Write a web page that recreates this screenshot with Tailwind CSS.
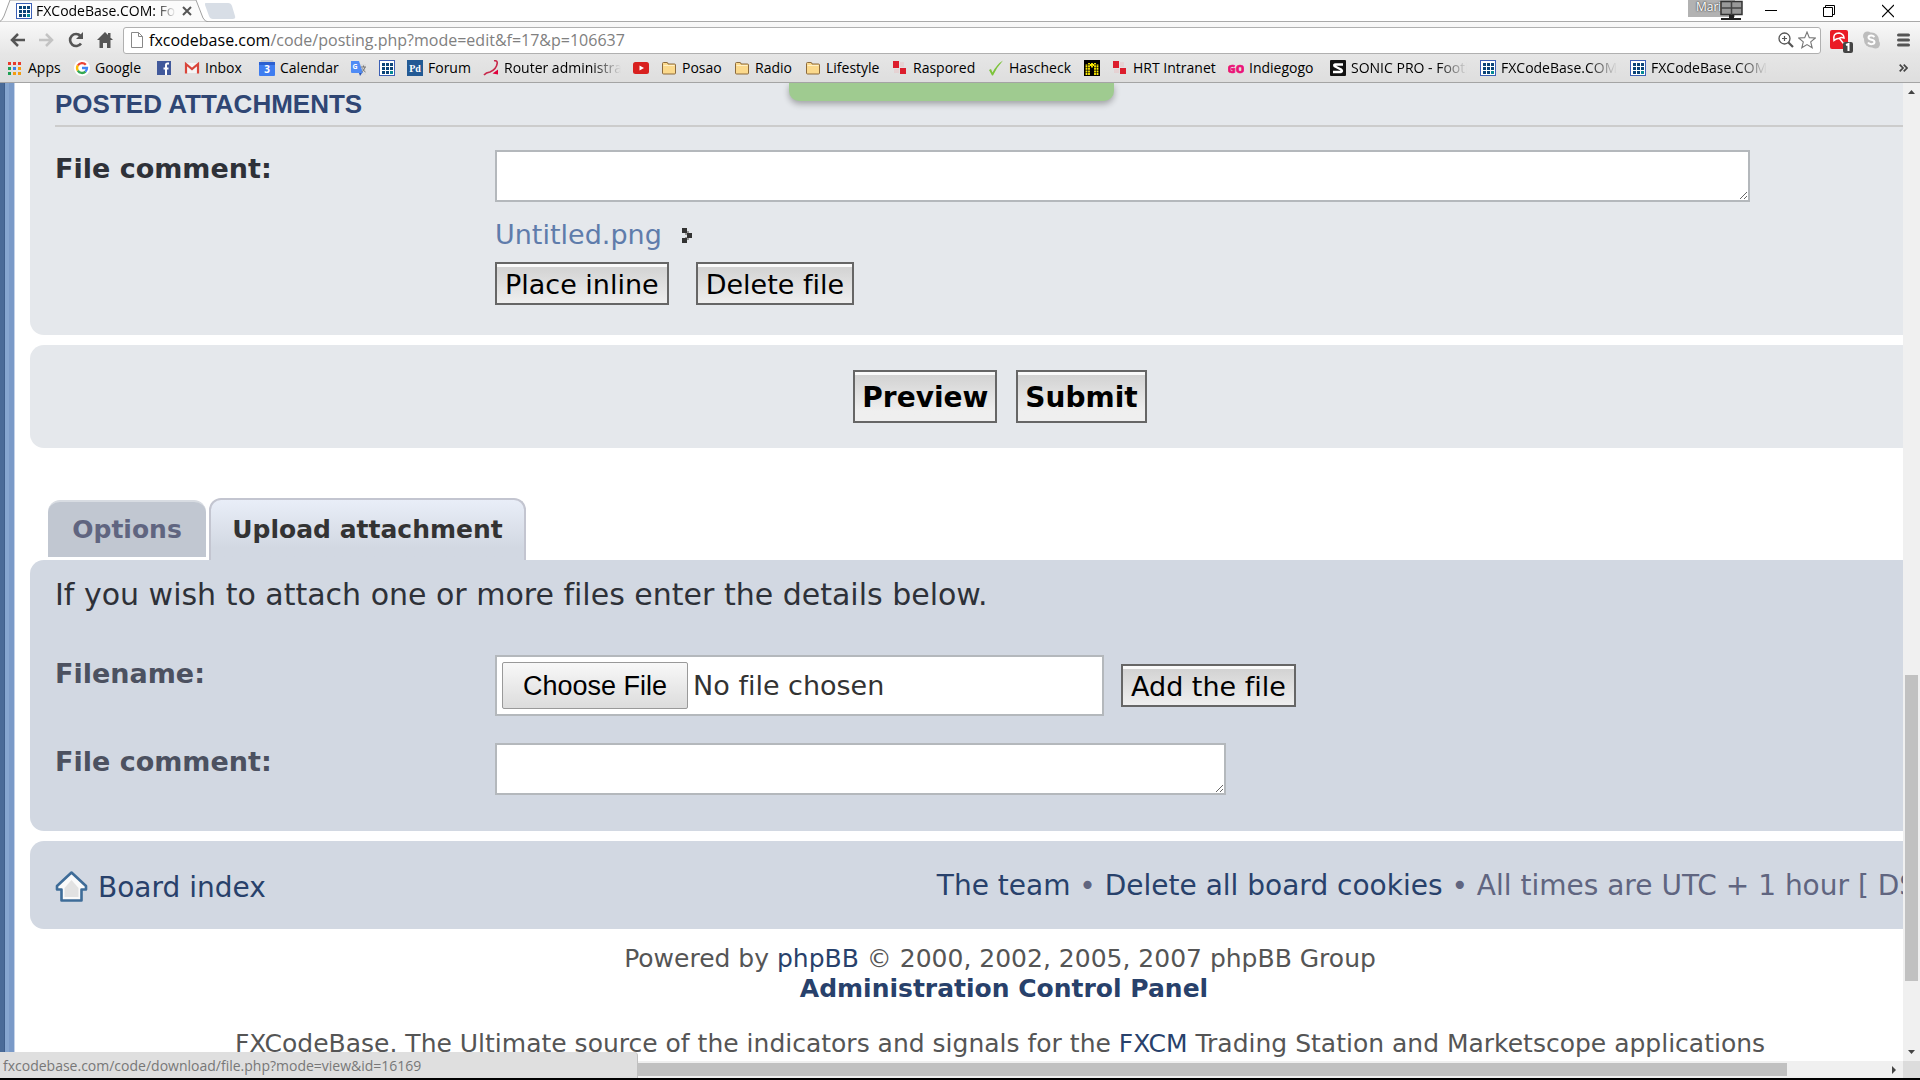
<!DOCTYPE html>
<html lang="en">
<head>
<meta charset="utf-8">
<title>FXCodeBase.COM: Forum</title>
<script src="https://cdn.jsdelivr.net/npm/@tailwindcss/browser@4"></script>
</head>
<body class="h-screen flex flex-col overflow-hidden bg-white font-['Open_Sans',sans-serif] text-sm text-black">

<svg class="hidden" aria-hidden="true">
  <symbol id="fx" viewBox="0 0 16 16"><rect width="16" height="16" fill="#3b5fb5"/><rect x="1" y="1" width="14" height="14" fill="#fff"/><path fill="#0b4478" d="M3 3h3v3H3zM7 3h3v3H7zM11 3h3v3h-3zM3 7h3v3H3zM7 7h3v3H7zM11 7h3v3h-3zM3 11h3v3H3zM7 11h3v3H7z"/><path fill="#078a94" d="M11 11h3v3h-3z"/></symbol>
  <symbol id="folder" viewBox="0 0 16 16"><path d="M1.500 13V3.500q0-1 1-1h3.500q1 0 1 1.500h6.500q1 0 1 1V13q0 1-1 1h-11q-1 0-1-1z" fill="#fbd98c" stroke="#8c6a3c"/><path d="M2.500 5.500h11" stroke="#fff0c8"/></symbol>
  <symbol id="hrt" viewBox="0 0 16 16"><path fill="#dc1e2d" d="M1 1h6v7H1zM8 8h6v6H8z"/><path fill="#f0b0b4" d="M8 2h4v5H8zM2 9h5v4H2z" opacity=".3"/></symbol>
</svg>

<!-- tab strip -->
<header class="shrink-0">
  <div class="h-[22px] flex border-b border-[#a9a9a9] bg-white">
    <div class="relative w-[205px] h-[22px]">
      <svg class="absolute inset-0" width="208" height="22" viewBox="0 0 208 22"><path d="M-1 22Q2 21 4 16L10 0H196L203 18Q205 22 209 22z" fill="#fbfbfb" stroke="#a0a0a0"/></svg>
      <div class="relative h-full flex items-center pl-4">
        <svg class="size-4"><use href="#fx"/></svg>
        <span class="ml-1 w-[140px] overflow-hidden whitespace-nowrap mask-r-from-85%">FXCodeBase.COM: Forum</span>
        <button class="ml-1.5" aria-label="Close tab"><svg width="10" height="10" viewBox="0 0 10 10"><path d="M1 1l8 8M9 1l-8 8" stroke="#555" stroke-width="2"/></svg></button>
      </div>
    </div>
    <button aria-label="New tab" class="h-[22px]"><svg width="32" height="22" viewBox="0 0 32 22"><path d="M1 3H23Q26 3 27 6L30 16Q31 19 28 19H8Q5 19 4 16L0 5Q-1 3 1 3z" fill="#d8dee6"/></svg></button>
    <div class="flex-1"></div>
    <div class="relative w-[55px] h-[22px]">
      <div class="h-[17px] w-[47px] bg-[#b2b2b2] pl-2 text-xs/[14px] text-white text-shadow-[0_0_2px_#000]">Mari</div>
      <svg class="absolute left-8 top-0" width="23" height="20" viewBox="0 0 23 20"><rect x="1" y="1.500" width="21" height="13" fill="#999" stroke="#333" stroke-width="1.500"/><path d="M11.500 1v14M1 8h21" stroke="#444" stroke-width="1.500"/><path d="M9 15h5v3H9zM1 18h20v2H1z" fill="#222"/></svg>
    </div>
    <button aria-label="Minimize" class="ml-[22px]"><svg width="12" height="22" viewBox="0 0 12 22"><path d="M0 10.500h12" stroke="#000"/></svg></button>
    <button aria-label="Restore" class="ml-[46px]"><svg width="12" height="22" viewBox="0 0 12 22"><path d="M.5 7.500h9v9h-9zM2.500 7.500v-2h9v9h-2" fill="none" stroke="#000"/></svg></button>
    <button aria-label="Close" class="ml-[47px] mr-[26px]"><svg width="12" height="22" viewBox="0 0 12 22"><path d="M0 5l12 12M12 5L0 17" stroke="#000" stroke-width="1.200"/></svg></button>
  </div>

  <!-- toolbar -->
  <div class="h-8 flex items-center bg-linear-to-b from-[#f9f9f9] to-[#e6e6e6] pl-2.5 pr-2.5 pt-1">
    <button aria-label="Back"><svg width="16" height="16" viewBox="0 0 16 16"><path d="M8 2L2 8l6 6M2 8h13" fill="none" stroke="#555" stroke-width="2.500"/></svg></button>
    <button aria-label="Forward" class="ml-3"><svg width="16" height="16" viewBox="0 0 16 16"><path d="M8 2l6 6-6 6M14 8H1" fill="none" stroke="#c3c3c3" stroke-width="2.500"/></svg></button>
    <button aria-label="Reload" class="ml-3.5"><svg width="16" height="16" viewBox="0 0 16 16"><path d="M13 11.500A6 6 0 1 1 12.500 4" fill="none" stroke="#555" stroke-width="2.600"/><path d="M15 0v7H8z" fill="#555"/></svg></button>
    <button aria-label="Home" class="ml-3"><svg width="18" height="16" viewBox="0 0 18 16"><path d="M9 0l8 8h-2.500v8H11v-5H7v5H3.500V8H1zM12 1h2.500v4H12z" fill="#555"/></svg></button>
    <div class="ml-[9px] flex-1 h-[27px] flex items-center rounded-[3px] border border-[#b0b0b0] bg-white pl-[7px] pr-1">
      <svg width="12" height="16" viewBox="0 0 12 16"><path d="M.5.5h7l4 4v11H.5zM7.500.5v4h4" fill="#fff" stroke="#888"/></svg>
      <div class="ml-1.5 flex-1 text-base/6 text-[#808080]"><span class="text-black">fxcodebase.com</span>/code/posting.php?mode=edit&amp;f=17&amp;p=106637</div>
      <button aria-label="Zoom"><svg width="16" height="16" viewBox="0 0 16 16"><circle cx="6.500" cy="6.500" r="5.500" fill="none" stroke="#555" stroke-width="1.300"/><path d="M10.500 10.500l4.500 4.500" stroke="#555" stroke-width="2.200"/><path d="M4 6.500h5M6.500 4v5" stroke="#555" stroke-width="1.200"/></svg></button>
      <button aria-label="Bookmark this page" class="ml-1"><svg width="18" height="18" viewBox="0 0 18 18"><path d="M9 1l2.300 5.600 6 .4-4.600 3.900 1.500 5.900L9 13.600l-5.200 3.200 1.500-5.900L.7 7l6-.4z" fill="#fff" stroke="#777" stroke-width="1.100"/></svg></button>
    </div>
    <button aria-label="Avira" class="ml-2"><svg width="26" height="25" viewBox="0 0 26 25"><rect x="1" y="2" width="18" height="19" rx="2" fill="#ea1b25"/><path d="M5 12.500Q3.500 5 10 5q5 1 5 5-3-1-5 .5-2-.5-5 2zM10.500 10.500l3.500 4.500q2 1 2.500-1" fill="none" stroke="#fff" stroke-width="1.500"/><rect x="14" y="14" width="10" height="11" rx="2" fill="#444"/><path d="M17 17l2.500-1v7" fill="none" stroke="#fff" stroke-width="2"/></svg></button>
    <button aria-label="Skype" class="ml-[7px]"><svg width="19" height="18" viewBox="0 0 19 18"><circle cx="9.500" cy="9" r="7.500" fill="#bdbdbd"/><circle cx="5.500" cy="5" r="4.500" fill="#bdbdbd"/><circle cx="13.500" cy="13" r="4.500" fill="#bdbdbd"/><path d="M12.500 6Q11 4.500 9.300 4.500 6.500 4.500 6.500 6.500c0 3 6 1.500 6 4.500 0 2.500-5 3-6.500.5" fill="none" stroke="#fff" stroke-width="2"/></svg></button>
    <button aria-label="Menu" class="ml-4"><svg width="13" height="16" viewBox="0 0 13 16"><path d="M1.500 3h10M1.500 8h10M1.500 13h10" stroke="#555" stroke-width="3" stroke-linecap="round"/></svg></button>
  </div>

  <!-- bookmarks bar -->
  <nav class="h-[29px] flex items-center border-b border-[#a4a4a4] bg-linear-to-b from-[#e6e6e6] to-[#dedede] pl-[7px] whitespace-nowrap [&>a]:flex [&>a]:items-center [&>a]:gap-[5px] [&>a]:shrink-0">
    <a href="#" class="w-[67px]"><svg class="size-4" viewBox="0 0 16 16"><path fill="#e8392b" d="M1 2h3v3H1zM6 2h3v3H6zM11 2h3v3h-3z"/><path fill="#f39c12" d="M11 7h3v3h-3zM11 12h3v3h-3zM6 12h3v3H6z"/><path fill="#1ea053" d="M1 7h3v3H1zM1 12h3v3H1z"/><path fill="#3c7ee8" d="M6 7h3v3H6z"/></svg>Apps</a>
    <a href="#" class="w-[82px]"><svg class="size-4" viewBox="0 0 16 16"><circle cx="8" cy="8" r="8" fill="#fff"/><g fill="none" stroke-width="2.300"><path d="M3.800 5.500A5 5 0 0 1 11.800 4.700" stroke="#ea4335"/><path d="M3.800 10.600a5 5 0 0 1 0-5.200" stroke="#fbbc05"/><path d="M11.500 11.600a5 5 0 0 1-7.700-1" stroke="#34a853"/><path d="M8 8h5a5 5 0 0 1-1.600 3.700" stroke="#4285f4"/></g></svg>Google</a>
    <a href="#" class="w-7" aria-label="Facebook"><svg class="size-4" viewBox="0 0 16 16"><rect x="1" y="1" width="14" height="14" fill="#41599b"/><path d="M13 3.500h-1.500q-1.500 0-1.500 1.500v10M7.500 8.500h5" stroke="#fff" stroke-width="2" fill="none"/></svg></a>
    <a href="#" class="w-[75px]"><svg class="size-4" viewBox="0 0 16 16"><path d="M2 3h12v10H2z" fill="#f5f5f5"/><path d="M2 13.500V4l6 5 6-5v9.500" fill="none" stroke="#d9453a" stroke-width="2.200"/></svg>Inbox</a>
    <a href="#" class="w-[92px]"><svg class="size-4" viewBox="0 0 16 16"><path d="M2 0h12l1 3H1z" fill="#c9cdd3"/><rect y="2" width="16" height="14" rx="1" fill="#3f7df0"/><path d="M0 2h16v3H0z" fill="#2b5fd0"/><text x="8" y="13" text-anchor="middle" font-size="10" font-weight="700" fill="#fff">3</text></svg>Calendar</a>
    <a href="#" class="w-7" aria-label="Translate"><svg class="size-4" viewBox="0 0 16 16"><path d="M6 4h9v11H9z" fill="#dcdcdc"/><path d="M0 1h8l4 12H1q-1 0-1-1z" fill="#4f8bf5"/><path d="M8 13h3l-2 3z" fill="#2a56b8"/><text x="1.500" y="9" font-size="7" font-weight="700" fill="#fff">G</text><path d="M10 7h5M12.500 5.500V7M14 7q-1 4-3.500 5M11.500 8.500q1 2.500 3 3.500" stroke="#777" fill="none"/></svg></a>
    <a href="#" class="w-7" aria-label="FXCodeBase"><svg class="size-4"><use href="#fx"/></svg></a>
    <a href="#" class="w-[76px]"><svg class="size-4" viewBox="0 0 16 16"><rect width="16" height="16" fill="#235a94"/><text x="8" y="12" text-anchor="middle" font-size="10" font-weight="700" font-family="Liberation Serif" fill="#fff">Pd</text></svg>Forum</a>
    <a href="#" class="w-[150px]"><svg class="size-4 shrink-0" viewBox="0 0 16 16"><path d="M11 .8q3.500-.5 3.200 2.500Q13.500 9 7 12 3 12.500 1 15" fill="none" stroke="#c8284a" stroke-width="1.600"/><path d="M9.500 13.500L15 9.500v5z" fill="#e0003c"/></svg><span class="w-[117px] overflow-hidden mask-r-from-75%">Router administration</span></a>
    <a href="#" class="w-7" aria-label="YouTube"><svg class="size-4" viewBox="0 0 16 16"><rect y="2" width="16" height="12" rx="2.500" fill="#d8201f"/><path d="M6.500 5.500v5L11 8z" fill="#fff"/></svg></a>
    <a href="#" class="w-[73px]"><svg class="size-4"><use href="#folder"/></svg>Posao</a>
    <a href="#" class="w-[71px]"><svg class="size-4"><use href="#folder"/></svg>Radio</a>
    <a href="#" class="w-[87px]"><svg class="size-4"><use href="#folder"/></svg>Lifestyle</a>
    <a href="#" class="w-24"><svg class="size-4"><use href="#hrt"/></svg>Raspored</a>
    <a href="#" class="w-24"><svg class="size-4" viewBox="0 0 16 16"><path d="M1 10l2-1 1.500 3.500Q9 4 15 .5 9 7 5 15.500H4z" fill="#7cc33a"/></svg>Hascheck</a>
    <a href="#" class="w-7" aria-label="Manager"><svg class="size-4" viewBox="0 0 16 16"><rect width="16" height="16" fill="#000"/><path d="M2.500 15V4M5 15V3M11 15V3M13.500 15V4M6 5h4M8 3v5" fill="none" stroke="#ffee00" stroke-width="1.800" stroke-dasharray="2 .6"/></svg></a>
    <a href="#" class="w-[116px]"><svg class="size-4"><use href="#hrt"/></svg>HRT Intranet</a>
    <a href="#" class="w-[102px]"><svg class="size-4" viewBox="0 0 16 16"><text x="8" y="12.500" text-anchor="middle" font-size="11" font-weight="800" stroke="#eb1478" stroke-width=".6" fill="#eb1478">GO</text></svg>Indiegogo</a>
    <a href="#" class="w-[150px]"><svg class="size-4 shrink-0" viewBox="0 0 16 16"><rect width="16" height="16" rx="1" fill="#111"/><path d="M13 4.500H5.500q-2 0-1 1.700L11 9.500q2 1.700 0 2.500H3" fill="none" stroke="#fff" stroke-width="2.300"/></svg><span class="w-[116px] overflow-hidden mask-r-from-75%">SONIC PRO - Football</span></a>
    <a href="#" class="w-[150px]"><svg class="size-4 shrink-0"><use href="#fx"/></svg><span class="w-[116px] overflow-hidden mask-r-from-75%">FXCodeBase.COM: Forum</span></a>
    <a href="#" class="w-[150px]"><svg class="size-4 shrink-0"><use href="#fx"/></svg><span class="w-[116px] overflow-hidden mask-r-from-75%">FXCodeBase.COM: Forum</span></a>
    <button class="ml-auto mr-3" aria-label="More bookmarks"><svg width="9" height="8" viewBox="0 0 9 8"><path d="M.7.7L4 4 .7 7.300M4.700.7L8 4 4.700 7.300" fill="none" stroke="#444" stroke-width="1.700"/></svg></button>
  </nav>
</header>

<!-- page viewport -->
<div class="relative flex-1 min-h-0 flex">
  <main class="relative flex-1 min-w-0 overflow-hidden flex font-['DejaVu_Sans',sans-serif] text-[27px]/[34px] [font-variant-ligatures:none]">
    <div class="w-4 shrink-0 flex">
      <div class="w-1 bg-[#4a6b98]"></div>
      <div class="w-px bg-[#3f5f8c]"></div>
      <div class="w-1 bg-[#86a6d0]"></div>
      <div class="w-[5px] bg-[#7a9ac8]"></div>
      <div class="w-px bg-[#c5d3e8]"></div>
    </div>
    <div class="flex-1 ml-3.5 -mr-[67px] min-w-0">

      <section class="h-[252px] rounded-bl-[14px] bg-[#e5e8ec] pl-[25px] pr-[25px]">
        <h3 class="pt-1 h-[44px] border-b-2 border-[#cccccc] -mr-[25px] font-['Liberation_Sans',sans-serif] font-bold text-[26px]/[34px] text-[#2f4674]">POSTED ATTACHMENTS</h3>
        <div class="flex pt-[23px]">
          <label for="c1" class="w-[440px] shrink-0 pt-0.5 font-bold text-[#2e3138]">File comment:</label>
          <div class="flex-1">
            <textarea id="c1" class="block w-full max-w-[1255px] h-[52px] border-2 border-[#b4b8bc] bg-white"></textarea>
            <div class="mt-4 flex items-center"><a href="#" class="text-[#5f7cab]">Untitled.png</a>
              <svg class="ml-5" width="10" height="15" viewBox="0 0 10 15"><path fill="#333" d="M0 0h5v5H0zM5 5h5v5H5zM0 10h5v5H0z"/><path fill="#999" d="M5 3h2v2H5zM3 5h2v2H3zM3 9h2v1H3zM5 10h2v2H5z"/></svg></div>
            <div class="mt-2.5 flex gap-[27px]">
              <button class="h-[43px] px-2 pt-0.5 border-2 border-[#666] bg-linear-to-b from-[#d0d0d0] to-[#efefef] inset-shadow-[0_3px_0_#fafafa]">Place inline</button>
              <button class="h-[43px] px-2 pt-0.5 border-2 border-[#666] bg-linear-to-b from-[#d0d0d0] to-[#efefef] inset-shadow-[0_3px_0_#fafafa]">Delete file</button>
            </div>
          </div>
        </div>
      </section>

      <section class="mt-2.5 h-[103px] rounded-l-[14px] bg-[#e5e8ec] flex items-center justify-center gap-[19px] font-bold text-[28px]/[34px]">
        <button class="h-[53px] px-[7px] pt-0.5 border-2 border-[#666] bg-linear-to-b from-[#d0d0d0] to-[#efefef] to-80% inset-shadow-[0_3px_0_#fafafa]">Preview</button>
        <button class="h-[53px] px-[7px] pt-0.5 border-2 border-[#666] bg-linear-to-b from-[#d0d0d0] to-[#efefef] to-80% inset-shadow-[0_3px_0_#fafafa]">Submit</button>
      </section>

      <div class="mt-[50px] ml-[18px] h-[62px] flex gap-[3px] font-bold text-[25px]/[32px]">
        <a href="#" class="mt-0.5 h-[57px] w-[158px] rounded-t-xl border-t-2 border-[#d8dce2] bg-[#c1c7d1] pt-3 text-center text-[#606580]">Options</a>
        <a href="#" class="h-[62px] w-[317px] rounded-t-xl border-2 border-b-0 border-[#c3c5d0] bg-linear-to-b from-[#e9eef8] to-[#d2d8e2] to-80% pt-3.5 text-center text-[#333]">Upload attachment</a>
      </div>

      <section class="h-[271px] rounded-l-[14px] bg-[#d2d8e2] px-[25px] pt-[18px] text-[#4c5160]">
        <p class="text-[30px]/[34px] text-[#2e3138]">If you wish to attach one or more files enter the details below.</p>
        <div class="mt-[43px] flex">
          <label for="f" class="w-[440px] shrink-0 pt-0.5 font-bold">Filename:</label>
          <div class="flex items-center gap-[17px]">
            <input id="f" type="file" class="w-[609px] h-[61px] border-2 border-[#b4b8bc] bg-white p-[5px] text-[27px]/[36px] text-[#333] file:mr-[5px] file:h-[47px] file:rounded-[2px] file:border file:border-[#999] file:bg-linear-to-b file:from-[#f8f8f8] file:to-[#dcdcdc] file:px-5 file:font-['Liberation_Sans',sans-serif] file:text-[27px] file:text-black">
            <button class="h-[43px] px-2 pt-0.5 border-2 border-[#666] bg-linear-to-b from-[#d0d0d0] to-[#efefef] inset-shadow-[0_3px_0_#fafafa] text-black">Add the file</button>
          </div>
        </div>
        <div class="mt-[27px] flex">
          <label for="c2" class="w-[440px] shrink-0 pt-0.5 font-bold">File comment:</label>
          <textarea id="c2" class="block w-[731px] h-[52px] border-2 border-[#b4b8bc] bg-white"></textarea>
        </div>
      </section>

      <footer>
        <div class="mt-2.5 h-[88px] rounded-l-[14px] bg-[#d2d8e2] pl-[25px] pr-4 pt-0.5 flex items-center justify-between whitespace-nowrap text-[28px]/[34px] text-[#606580]">
          <a href="#" class="flex items-center gap-2.5 text-[#28416b]">
            <svg width="33" height="31" viewBox="0 0 33 31"><path d="M16.500 1.500L31 15v3.500h-4.500v11h-20v-11H2V15z" fill="#fafafa" stroke="#3e6c98" stroke-width="2.600" stroke-linejoin="round"/><path d="M16.500 9l7 8v9h-14v-9z" fill="#e2e2e2"/></svg><span class="pt-1">Board index</span></a>
          <p><a href="#" class="text-[#28416b]">The team</a> • <a href="#" class="text-[#28416b]">Delete all board cookies</a> • All times are UTC + 1 hour [ DST ]</p>
        </div>
        <div class="pt-[15px] text-center text-[25px]/[30px] text-[#555] whitespace-nowrap">
          <p>Powered by <a href="#" class="text-[#28416b]">phpBB</a> © 2000, 2002, 2005, 2007 phpBB Group</p>
          <p class="pl-2"><a href="#" class="font-bold text-[#28416b]">Administration Control Panel</a></p>
          <p class="mt-[25px]">FXCodeBase. The Ultimate source of the indicators and signals for the <a href="#" class="text-[#28416b]">FXCM</a> Trading Station and Marketscope applications</p>
        </div>
      </footer>
    </div>
    <div class="absolute left-[789px] top-0 w-[325px] h-[18px] rounded-b-[10px] bg-[#9fcb90] shadow-[0_3px_6px_#0000004d]"></div>
  </main>

  <div class="w-[17px] shrink-0 bg-[#f0f0f0] relative">
    <svg class="absolute left-[5px] top-[7px]" width="7" height="4" viewBox="0 0 7 4"><path d="M0 4L3.500 0 7 4z" fill="#444"/></svg>
    <div class="absolute left-0.5 top-[592px] w-[13px] h-[306px] bg-[#c1c1c1]"></div>
    <svg class="absolute left-[5px] bottom-[7px]" width="7" height="4" viewBox="0 0 7 4"><path d="M0 0l3.500 4L7 0z" fill="#444"/></svg>
  </div>
</div>

<!-- horizontal scroll bar and link status bubble -->
<div class="relative shrink-0 h-[19px] border-b-2 border-black bg-[#f0f0f0]">
  <div class="absolute left-0 right-[133px] top-0.5 h-[13px] bg-[#c1c1c1]"></div>
  <svg class="absolute right-6 top-[5px]" width="4" height="8" viewBox="0 0 4 8"><path d="M0 0l4 4-4 4z" fill="#444"/></svg>
  <div class="absolute right-0 top-0 w-[17px] h-[17px] bg-[#dcdcdc]"></div>
  <div class="absolute left-0 bottom-0 w-[638px] h-[26px] rounded-tr border-r border-[#c0c0c0] bg-[#dfdfdf] pl-[3px] pt-0.5 text-sm/6 text-[#777]">fxcodebase.com/code/download/file.php?mode=view&amp;id=16169</div>
</div>
</body>
</html>
